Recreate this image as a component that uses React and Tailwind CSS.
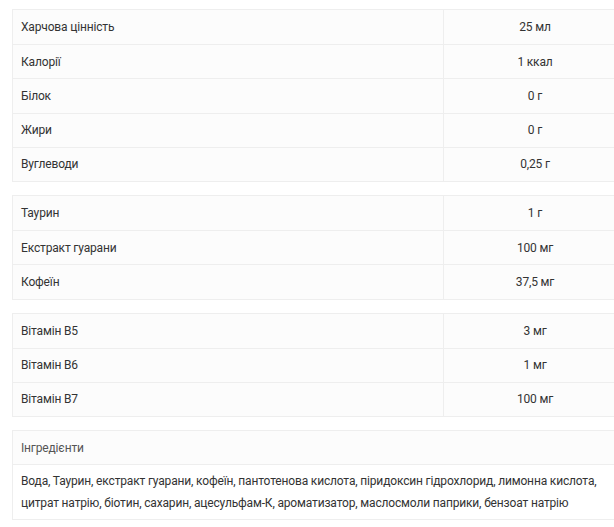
import React from "react";

const groups = [
    [
        ["Харчова цінність", "25 мл"],
        ["Калорії", "1 ккал"],
        ["Білок", "0 г"],
        ["Жири", "0 г"],
        ["Вуглеводи", "0,25 г"],
    ],
    [
        ["Таурин", "1 г"],
        ["Екстракт гуарани", "100 мг"],
        ["Кофеїн", "37,5 мг"],
    ],
    [
        ["Вітамін B5", "3 мг"],
        ["Вітамін B6", "1 мг"],
        ["Вітамін B7", "100 мг"],
    ],
];

function SpecTable({ rows }) {
    return (
        <div className="w-[615px] border border-[#eeeeee] bg-[#fcfcfc] mb-[13px]">
            {rows.map(([label, value], i) => (
                <div
                    key={label}
                    className={`flex h-[34.2px] items-center ${i > 0 ? "border-t border-[#eeeeee]" : ""}`}
                >
                    <div className="w-[431px] h-full flex items-center pl-[8px] border-r border-[#eeeeee]">{label}</div>
                    <div className="flex-1 text-center">{value}</div>
                </div>
            ))}
        </div>
    );
}

export default function App() {
    return (
        <div className="min-h-[527px] bg-white overflow-hidden pt-[9px] pl-[12px] text-[12px] tracking-[-0.16px] text-[#333333] font-['Roboto','Liberation_Sans',sans-serif]">
            {groups.map((rows, i) => (
                <SpecTable key={i} rows={rows} />
            ))}

            {/* Ingredients */}
            <div className="w-[615px] border border-[#eeeeee] bg-[#fcfcfc]">
                <div className="h-[34.2px] flex items-center pl-[8px] border-b border-[#eeeeee] text-[#555555]">Інгредієнти</div>
                <p className="bg-white px-[8px] py-[5px] leading-[22px] whitespace-nowrap">
                    Вода, Таурин, екстракт гуарани, кофеїн, пантотенова кислота, піридоксин гідрохлорид, лимонна кислота,
                    <br />
                    цитрат натрію, біотин, сахарин, ацесульфам-К, ароматизатор, маслосмоли паприки, бензоат натрію
                </p>
            </div>
        </div>
    );
}
